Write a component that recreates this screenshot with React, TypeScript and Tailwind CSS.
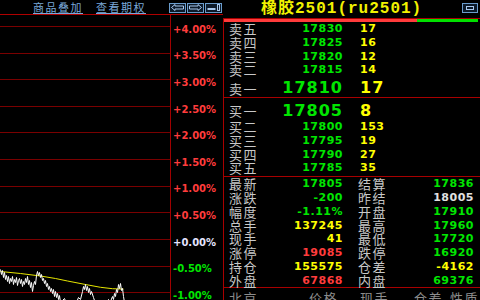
import React from 'react';

const cjk = "font-['Noto_Sans_CJK_SC',sans-serif]";
const num = "font-['DejaVu_Sans',sans-serif] font-bold";

const GREEN = 'text-[#00e600]';
const YELLOW = 'text-[#ffff00]';
const RED = 'text-[#ff3c3c]';
const WHITE = 'text-[#e0e0e0]';

const sells = [
  ['卖五', '17830', '17'],
  ['卖四', '17825', '16'],
  ['卖三', '17820', '12'],
  ['卖二', '17815', '14'],
];

const buys = [
  ['买二', '17800', '153'],
  ['买三', '17795', '19'],
  ['买四', '17790', '27'],
  ['买五', '17785', '35'],
];

const stats: [string, string, string, string, string, string][] = [
  ['最新', '17805', GREEN, '结算', '17836', GREEN],
  ['涨跌', '-200', GREEN, '昨结', '18005', WHITE],
  ['幅度', '-1.11%', GREEN, '开盘', '17910', GREEN],
  ['总手', '137245', YELLOW, '最高', '17960', GREEN],
  ['现手', '41', YELLOW, '最低', '17720', GREEN],
  ['涨停', '19085', RED, '跌停', '16920', GREEN],
  ['持仓', '155575', YELLOW, '仓差', '-4162', YELLOW],
  ['外盘', '67868', RED, '内盘', '69376', GREEN],
];

const axis: [string, string][] = [
  ['+4.00%', RED],
  ['+3.50%', RED],
  ['+3.00%', RED],
  ['+2.50%', RED],
  ['+2.00%', RED],
  ['+1.50%', RED],
  ['+1.00%', RED],
  ['+0.50%', RED],
  ['+0.00%', 'text-[#e4e4ff]'],
  ['-0.50%', GREEN],
  ['-1.00%', GREEN],
];

// tick prices, absolute page coords (y offset removed below)
const priceLine = [
  [0, 269], [1, 274], [2, 270], [3, 277], [4, 272], [5, 279], [6, 275], [7, 281], [8, 276], [9, 283],
  [10, 278], [11, 281], [12, 276], [13, 284], [14, 279], [15, 282], [16, 277], [17, 285], [18, 280],
  [19, 278], [20, 283], [21, 279], [22, 286], [23, 281], [24, 284], [25, 278], [26, 282], [27, 276],
  [28, 284], [29, 280], [30, 287], [31, 282], [32, 291], [33, 285], [34, 281], [35, 284], [36, 275],
  [37, 271], [38, 275], [39, 272], [40, 277], [41, 274], [42, 280], [43, 278], [44, 283], [45, 280],
  [46, 286], [47, 283], [48, 289], [49, 286], [50, 291], [51, 288], [52, 293], [53, 289], [54, 296],
  [55, 291], [56, 297], [57, 293], [58, 299], [59, 295], [60, 302], [64, 298], [66, 303], [70, 306],
  [76, 302], [78, 297], [80, 299], [82, 291], [83, 286], [84, 289], [85, 284], [86, 290], [87, 286],
  [88, 292], [89, 288], [90, 294], [91, 291], [93, 297], [95, 303], [100, 306], [106, 303], [108, 299],
  [110, 301], [112, 296], [113, 299], [114, 293], [115, 296], [116, 289], [117, 292], [118, 284],
  [119, 288], [120, 283], [121, 290], [122, 288], [123, 296], [124, 302],
];

const avgLine = [
  [0, 271], [20, 273], [40, 275.5], [55, 278], [67, 280.5], [85, 284], [100, 286.8], [112, 288.2], [123, 288.6],
];

const toPath = (pts: number[][]) =>
  pts.map(([x, y], i) => `${i ? 'L' : 'M'}${x + 0.5} ${y - 15 + 0.5}`).join(' ');

function Chart() {
  return (
    <svg width="170" height="285" className="block">
      {axis.map((_, i) => {
        const y = Math.round(11 + 26.62 * i) + 0.5;
        return <line key={i} x1="0" x2="170" y1={y} y2={y} stroke="#7a0000" strokeWidth="1" />;
      })}
      <path d={toPath(avgLine)} fill="none" stroke="#e6e600" strokeWidth="1" />
      <path d={toPath(priceLine)} fill="none" stroke="#ffffff" strokeWidth="1" />
    </svg>
  );
}

function NavButton({ children }: { children: React.ReactNode }) {
  return (
    <div className="w-[17px] h-[10px] border border-[#6a9ccc] bg-[#0c1a2a] flex items-center justify-center">
      {children}
    </div>
  );
}

function TopBar() {
  return (
    <div className="h-[15px] border-b border-[#b00000] flex items-center pl-[33px] pt-[1px]">
      <span className={`${cjk} text-[11px] leading-none tracking-[1.5px] text-[#7aa8d8] underline underline-offset-[1px]`}>商品叠加</span>
      <span className={`${cjk} ml-[13px] text-[11px] leading-none tracking-[1.5px] text-[#7aa8d8] underline underline-offset-[1px]`}>查看期权</span>
      <div className="ml-auto flex gap-[1px] mr-[1px]">
        <NavButton>
          <svg width="13" height="7" viewBox="0 0 13 7">
            <path d="M0.5 3.5 L4 0.5 V2 H12.5 V5 H4 V6.5 Z" fill="none" stroke="#a8c8ec" strokeWidth="1" />
          </svg>
        </NavButton>
        <NavButton>
          <svg width="13" height="7" viewBox="0 0 13 7">
            <path d="M12.5 3.5 L9 0.5 V2 H0.5 V5 H9 V6.5 Z" fill="none" stroke="#a8c8ec" strokeWidth="1" />
          </svg>
        </NavButton>
        <NavButton>
          <svg width="13" height="7" viewBox="0 0 13 7">
            <rect x="0.5" y="4" width="8" height="2" fill="#a8c8ec" />
            <rect x="10.5" y="0.5" width="2" height="6" fill="none" stroke="#a8c8ec" strokeWidth="1" />
          </svg>
        </NavButton>
      </div>
    </div>
  );
}

function QuoteRow({ label, price, vol }: { label: string; price: string; vol: string }) {
  return (
    <div className="flex items-center h-[13.65px] pl-[5px]">
      <span className={`${cjk} w-[50px] text-[13px] leading-none tracking-[1.5px] text-[#c8c8c8]`}>{label}</span>
      <span className={`${num} w-[64px] text-right text-[11px] leading-none tracking-[0.5px] ${GREEN}`}>{price}</span>
      <span className={`${num} ml-[17px] text-[11px] leading-none tracking-[0.5px] ${YELLOW}`}>{vol}</span>
    </div>
  );
}

function BigRow({ label, price, vol, h }: { label: string; price: string; vol: string; h: string }) {
  return (
    <div className={`flex items-center ${h} pl-[5px] pt-[3px]`}>
      <span className={`${cjk} w-[50px] text-[13px] leading-none tracking-[1.5px] text-[#c8c8c8]`}>{label}</span>
      <span className={`${num} w-[64px] text-right text-[16px] leading-none tracking-[1px] ${GREEN}`}>{price}</span>
      <span className={`${num} ml-[17px] text-[16px] leading-none tracking-[1px] ${YELLOW}`}>{vol}</span>
    </div>
  );
}

export default function App() {
  return (
    <div className="w-[480px] h-[300px] bg-black flex overflow-hidden select-none">
      {/* left: intraday chart */}
      <div className="w-[223px] flex flex-col shrink-0">
        <TopBar />
        <div className="flex flex-1 min-h-0">
          <div className="w-[171px] border-r border-[#a00000] shrink-0">
            <Chart />
          </div>
          <div className="flex-1 flex flex-col pl-[2px]">
            {axis.map(([t, c]) => (
              <div key={t} className="h-[26.62px] shrink-0 flex items-center pt-[3px]">
                <span className={`${num} text-[10px] leading-none ${c}`}>{t}</span>
              </div>
            ))}
          </div>
        </div>
      </div>

      {/* right: quote panel */}
      <div className="flex-1 flex flex-col min-w-0">
        <div className="h-[18px] flex items-center pl-[38px] shrink-0">
          <span className={`font-['Liberation_Mono','Noto_Sans_CJK_SC',monospace] font-bold text-[16px] leading-none tracking-[1px] text-[#f2f200]`}>
            橡胶2501(ru2501)
          </span>
          <div className="ml-auto mr-[2px] mb-[3px] w-[16px] h-[10px] border border-[#6a9ccc] bg-[#0c1a2a] flex items-center justify-center">
            <div className="w-[8px] h-[4px] border border-[#a8c8ec]" />
          </div>
        </div>
        <div className="flex-1 flex flex-col border-l border-t border-[#a80000]">
          <div className="h-[3px] flex pr-[2px] shrink-0">
            <div className="w-[193px] bg-[#ff3b3b]" />
            <div className="flex-1 bg-[#00e000]" />
          </div>
          <div className="border-b border-[#a80000] shrink-0">
            {sells.map(([l, p, v]) => (
              <QuoteRow key={l} label={l} price={p} vol={v} />
            ))}
            <BigRow label="卖一" price="17810" vol="17" h="h-[20.6px]" />
          </div>
          <div className="border-b border-[#a80000] pb-[1px] shrink-0">
            <BigRow label="买一" price="17805" vol="8" h="h-[22px]" />
            {buys.map(([l, p, v]) => (
              <QuoteRow key={l} label={l} price={p} vol={v} />
            ))}
          </div>
          <div className="border-b border-[#a80000] shrink-0">
            {stats.map(([l1, v1, c1, l2, v2, c2]) => (
              <div key={l1} className="flex items-center h-[13.8px] pl-[5px] pr-[6px]">
                <span className={`${cjk} w-[50px] text-[13px] leading-none tracking-[1.5px] text-[#c8c8c8]`}>{l1}</span>
                <span className={`${num} w-[64px] text-right text-[11px] leading-none tracking-[0.5px] ${c1}`}>{v1}</span>
                <span className={`${cjk} ml-[15px] text-[13px] leading-none tracking-[1.5px] text-[#c8c8c8]`}>{l2}</span>
                <span className={`${num} flex-1 text-right text-[11px] leading-none tracking-[0.5px] ${c2}`}>{v2}</span>
              </div>
            ))}
          </div>
          <div className={`${cjk} flex items-center h-[14px] pl-[5px] pt-[4px] text-[13px] leading-none tracking-[1.5px] text-[#8c8c8c] shrink-0`}>
            <span className="w-[50px]">北京</span>
            <span className="w-[59px] text-right">价格</span>
            <span className="ml-[22px]">现手</span>
            <span className="ml-[25px]">仓差</span>
            <span className="ml-[7px]">性质</span>
          </div>
        </div>
      </div>
    </div>
  );
}
